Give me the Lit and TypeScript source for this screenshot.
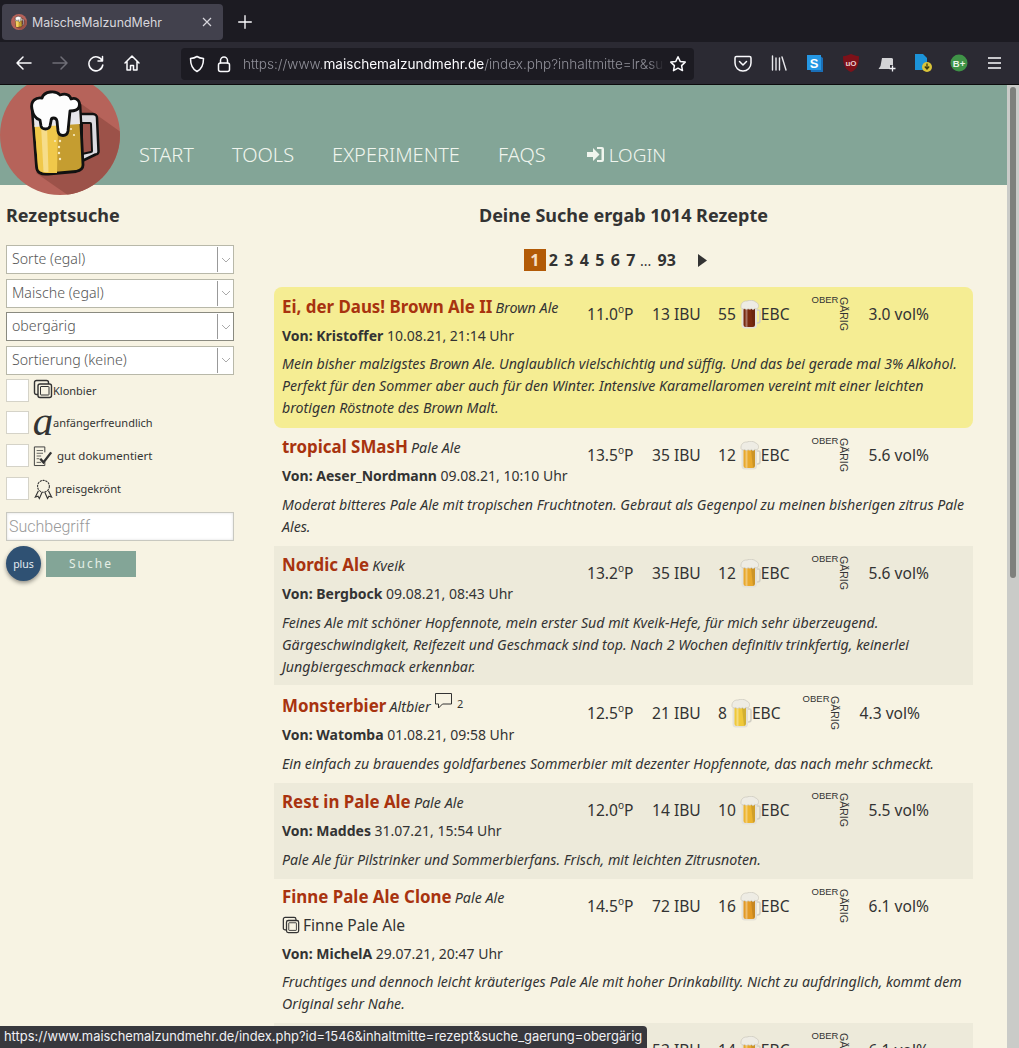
import { LitElement, html, css, svg } from 'lit'
import { customElement } from 'lit/decorators.js'

interface Recipe {
  title: string
  style: string
  comments?: number
  clone?: string
  author?: string
  date?: string
  plato?: string
  ibu: string
  ebc: string
  beer: string
  vol: string
  text: string
  cls?: string
}

const recipes: Recipe[] = [
  { title: 'Ei, der Daus! Brown Ale II', style: 'Brown Ale', author: 'Kristoffer', date: '10.08.21, 21:14 Uhr', plato: '11.0', ibu: '13', ebc: '55', beer: '#7a2a10', vol: '3.0', cls: 'top',
    text: 'Mein bisher malzigstes Brown Ale. Unglaublich vielschichtig und süffig. Und das bei gerade mal 3% Alkohol.\nPerfekt für den Sommer aber auch für den Winter. Intensive Karamellaromen vereint mit einer leichten\nbrotigen Röstnote des Brown Malt.' },
  { title: 'tropical SMasH', style: 'Pale Ale', author: 'Aeser_Nordmann', date: '09.08.21, 10:10 Uhr', plato: '13.5', ibu: '35', ebc: '12', beer: '#e9a92c', vol: '5.6',
    text: 'Moderat bitteres Pale Ale mit tropischen Fruchtnoten. Gebraut als Gegenpol zu meinen bisherigen zitrus Pale\nAles.' },
  { title: 'Nordic Ale', style: 'Kveik', author: 'Bergbock', date: '09.08.21, 08:43 Uhr', plato: '13.2', ibu: '35', ebc: '12', beer: '#e9a92c', vol: '5.6', cls: 'alt tight',
    text: 'Feines Ale mit schöner Hopfennote, mein erster Sud mit Kveik-Hefe, für mich sehr überzeugend.\nGärgeschwindigkeit, Reifezeit und Geschmack sind top. Nach 2 Wochen definitiv trinkfertig, keinerlei\nJungbiergeschmack erkennbar.' },
  { title: 'Monsterbier', style: 'Altbier', comments: 2, author: 'Watomba', date: '01.08.21, 09:58 Uhr', plato: '12.5', ibu: '21', ebc: '8', beer: '#f0c93a', vol: '4.3', cls: 'noted-row',
    text: 'Ein einfach zu brauendes goldfarbenes Sommerbier mit dezenter Hopfennote, das nach mehr schmeckt.' },
  { title: 'Rest in Pale Ale', style: 'Pale Ale', author: 'Maddes', date: '31.07.21, 15:54 Uhr', plato: '12.0', ibu: '14', ebc: '10', beer: '#edb52f', vol: '5.5', cls: 'alt',
    text: 'Pale Ale für Pilstrinker und Sommerbierfans. Frisch, mit leichten Zitrusnoten.' },
  { title: 'Finne Pale Ale Clone', style: 'Pale Ale', clone: 'Finne Pale Ale', author: 'MichelA', date: '29.07.21, 20:47 Uhr', plato: '14.5', ibu: '72', ebc: '16', beer: '#e39a25', vol: '6.1',
    text: 'Fruchtiges und dennoch leicht kräuteriges Pale Ale mit hoher Drinkability. Nicht zu aufdringlich, kommt dem\nOriginal sehr Nahe.' },
  // the status bar covers the left part of this row
  { title: '', style: '', ibu: '53', ebc: '14', beer: '#e9a92c', vol: '6.1', cls: 'alt', text: '' },
]

const cloneIcon = (size: number) => html`<svg width=${size} height=${size} viewBox="0 0 20 20" fill="none" stroke="#333" stroke-width="1.4">
  <path d="M5 15.500H3.500a2 2 0 0 1-2-2V3.500a2 2 0 0 1 2-2h10a2 2 0 0 1 2 2V5"/>
  <rect x="5" y="5" width="13.500" height="13.500" rx="2"/>
  <rect x="7.500" y="7.500" width="8.500" height="8.500" rx=".5" stroke-width="1"/>
</svg>`

const mug = (color: string) => html`<svg class="mug" width="21" height="29" viewBox="0 0 21 29">
  <path d="M16 10h2.500a1.500 1.500 0 0 1 1.500 1.500v9a2.500 2.500 0 0 1-2.500 2.500H16" fill="none" stroke="#d2cfc4" stroke-width="1.600"/>
  <path d="M1.500 7h15.500v18a3.500 3.500 0 0 1-3.500 3.500H5a3.500 3.500 0 0 1-3.500-3.500z" fill="#e4e1d8"/>
  <path d="M3.500 9h11.500v15.500a2.500 2.500 0 0 1-2.500 2.500H6a2.500 2.500 0 0 1-2.500-2.500z" fill=${color}/>
  <path d="M5.500 9h2v18h-1a1 1 0 0 1-1-1z" fill="#fff" opacity=".35"/>
  <path d="M11 9h4v15.500a2.500 2.500 0 0 1-2 2.400z" fill="#000" opacity=".12"/>
  <path d="M1 7.500C.5 3.500 3 .8 7 1c2.500-1.200 7-1 9 1.200 2.500.8 3.300 4 1.800 6-1 .9-2.300.7-3 0-.5 1.800-2.800 1.800-3.300.2-1 1.200-2.700 1.200-3.500 0-.8 1.500-2.300 1.600-3 .1C3.500 9.300 1.800 9 1 7.500z" fill="#eeece4" stroke="#c4c1b6" stroke-width=".6"/>
</svg>`

const logo = svg`
  <defs><clipPath id="disc"><circle cx="60" cy="60" r="60"/></clipPath></defs>
  <circle cx="60" cy="60" r="60" fill="#b6635a"/>
  <path clip-path="url(#disc)" d="M80 28 L122 58 V125 H75 L36 98 Z" fill="#9c5249"/>
  <path d="M79 39h14a4 4 0 0 1 4 4l1.500 33a3 3 0 0 1-3 3.500L82 86" fill="#dcdbe0" stroke="#111" stroke-width="2.500" stroke-linejoin="round"/>
  <path d="M82 48h8a1 1 0 0 1 1 1l1 27a1 1 0 0 1-1 1l-9 2z" fill="#9c5249" stroke="#111" stroke-width="2" stroke-linejoin="round"/>
  <path d="M32 32 L80 30 L83 90 Q83 95 76 96.500 L48 99 Q37 100 36.500 92 Z" fill="#c59d30" stroke="#111" stroke-width="2.800" stroke-linejoin="round"/>
  <path d="M34.500 50 L58 50 L57 98 L48 98 Q38 98.500 38 91 Z" fill="#f0c84a"/>
  <path d="M41 50 h6 l1.500 47 h-5 z" fill="#f6dd8a"/>
  <path d="M33.500 36 L79 32 L80 49 L34.500 52 Z" fill="#e7e6ea"/>
  <g fill="#f8edc4"><circle cx="60" cy="66" r="1.200"/><circle cx="59" cy="72" r="1.200"/><circle cx="59" cy="78" r="1.200"/><circle cx="60" cy="84" r="1.200"/><circle cx="71" cy="54" r="1.100"/><circle cx="74" cy="60" r="1.100"/><circle cx="55" cy="66" r="1"/></g>
  <path d="M32 34 C30 26 36 22 42 23 C44 16 56 15 60 20 C66 18 70 20 71 24 C76 22 81 26 79 32 C78 35 74 36 70 36 L68 56 C67 62 59 62 58 56 L57 46 C56 42 51 42 51 46 L50 51 C49 55 42 55 41 51 L40 45 C36 44 33 40 32 34 Z" fill="#fdfdfd" stroke="#111" stroke-width="2.800" stroke-linejoin="round"/>
`

@customElement('app-root')
export class AppRoot extends LitElement {
  static styles = css`
    :host {
      display: block;
      position: relative;
      height: 1048px;
      overflow: hidden;
      font-family: "Noto Sans", sans-serif;
      color: #333;
      background: #f7f3e3;
    }

    /* browser frame */
    .tabs {
      height: 42px;
      background: #1c1b22;
      display: flex;
      align-items: center;
      box-sizing: border-box;
      padding: 4px 2px 2px;
      font-family: Inter, sans-serif;
      color: #fbfbfe;
    }
    .tab {
      width: 221px;
      height: 36px;
      box-sizing: border-box;
      background: #42414d;
      border-radius: 4px;
      display: flex;
      align-items: center;
      padding: 0 10px 0 9px;
      font-size: 12.400px;
      color: #d7d6dc;
    }
    .tab .name { flex: 1; margin-left: 5px; }
    .newtab { margin-left: 13px; display: flex; }
    .toolbar {
      height: 43px;
      box-sizing: border-box;
      background: #2b2a33;
      border-bottom: 1px solid #0c0c0d;
      display: flex;
      align-items: center;
      padding: 0 0 0 14px;
    }
    .toolbar svg { display: block; flex: none; }
    .nav { display: flex; gap: 16px; width: 167px; }
    .url {
      width: 513px;
      height: 32px;
      margin-top: 2px;
      box-sizing: border-box;
      background: #1c1b22;
      border-radius: 4px;
      display: flex;
      align-items: center;
      padding: 0 7px 0 8px;
      font-family: Inter, sans-serif;
      font-size: 13.600px;
      font-weight: 300;
      color: #8f8f98;
      gap: 12px;
    }
    .url .addr {
      flex: 1;
      white-space: nowrap;
      overflow: hidden;
      margin-right: -7px;
      -webkit-mask-image: linear-gradient(to left, transparent, #000 14px);
      mask-image: linear-gradient(to left, transparent, #000 14px);
    }
    .url b { font-weight: 400; color: #fbfbfe; }
    .ext { display: flex; align-items: center; gap: 16px; margin-left: 39px; }

    /* page */
    .page { display: flex; height: 963px; }
    .view { flex: 1; min-width: 0; position: relative; overflow: hidden; }
    .logo { position: absolute; left: 0; top: -10px; display: block; }
    .header {
      height: 100px;
      background: #83a597;
      box-sizing: border-box;
      padding: 57px 0 0 139px;
      display: flex;
      gap: 38px;
      font-size: 20px;
      font-weight: 300;
      color: #f0f5ee;
    }
    .header a { display: flex; align-items: center; gap: 5px; height: 25px; }
    .header .login { margin-left: 3px; font-size: 19px; }
    .scroll {
      width: 12px;
      background: #cacbc8;
      box-sizing: border-box;
      padding: 2px 3px 0;
    }
    .thumb { height: 491px; border-radius: 3px; background: #7e807c; }

    .body { display: flex; }
    .side { width: 228px; margin: 0 40px 0 6px; }
    .side h2 { margin: 19px 0 18px; font-size: 18px; line-height: 23px; font-weight: 700; }
    .sel {
      height: 29px;
      box-sizing: border-box;
      margin-bottom: 4.500px;
      background: #fff;
      border: 1px solid #b8b8a9;
      display: flex;
      align-items: center;
      font-size: 14.200px;
      font-weight: 300;
      color: #555;
      padding: 0 0 2px 5px;
    }
    .sel.on { border-color: #8a8a80; }
    .sel span { flex: 1; }
    .arrow {
      width: 15px;
      height: 25px;
      margin-bottom: -2px;
      border-left: 1px solid #999;
      display: flex;
      align-items: center;
      justify-content: center;
    }
    .check {
      display: flex;
      align-items: center;
      height: 23px;
      margin-bottom: 10px;
      font-size: 11px;
      color: #333;
    }
    .check.first { margin-bottom: 9px; }
    .box {
      width: 23px;
      height: 23px;
      box-sizing: border-box;
      background: #fff;
      border: 1px solid #d5d3c8;
      margin-right: 4px;
      flex: none;
    }
    .ico { width: 20px; height: 24px; flex: none; display: flex; justify-content: center; }
    .a-ico { font: italic 41px/20px "Liberation Serif", serif; color: #333; }
    .check.doc { font-size: 11.500px; }
    .search {
      height: 29px;
      margin-top: 12px;
      box-sizing: border-box;
      background: #fff;
      border: 1px solid #c8c8c0;
      box-shadow: inset 0 0 3px #ddd;
      font: 300 16px/27px Roboto, sans-serif;
      color: #999;
      padding-left: 2px;
    }
    .actions { display: flex; align-items: center; margin-top: 5px; gap: 5px; }
    .plus {
      width: 35px;
      height: 35px;
      border-radius: 50%;
      background: #2f5173;
      color: #e4ebef;
      font-size: 10.500px;
      display: flex;
      align-items: center;
      justify-content: center;
      box-shadow: 0 2px 4px #0000006b;
    }
    .go {
      width: 90px;
      height: 26px;
      background: #83a597;
      color: #e6efe6;
      font-size: 12px;
      letter-spacing: 2px;
      display: flex;
      align-items: center;
      justify-content: center;
    }

    .main { width: 699px; }
    .main h1 { margin: 19px 0 0; font-size: 18px; line-height: 23px; font-weight: 700; text-align: center; }
    .pager {
      display: flex;
      justify-content: center;
      align-items: center;
      height: 22px;
      margin: 22px 0 16px;
      padding-right: 16px;
      font-size: 16px;
      font-weight: 700;
      gap: 6.400px;
    }
    .pager .cur { width: 22px; height: 22px; margin-right: -3.500px; background: #b25a06; color: #f6dfc4; text-align: center; line-height: 22px; }
    .pager .dots { font-weight: 400; margin: 0 0 0 -2px; font-size: 14px; }
    .pager svg { margin-left: 16px; }

    .row { padding: 7px 8px 8px; }
    .row.alt { background: #edeada; }
    .row.tight { padding-bottom: 7px; }
    .row.top { background: #f5ed93; border-radius: 8px; padding-top: 8px; padding-bottom: 9px; }
    .row.top .text { margin-top: 7px; }
    .row.cloned { padding-top: 6px; }
    .row.cloned .text { margin-top: 7px; }
    .row.cloned .by { margin-top: 6px; }
    .head { display: flex; }
    .left { width: 305px; flex: none; }
    .title { line-height: 24px; height: 24px; white-space: nowrap; }
    .title.noted { height: 26px; }
    .title a { font-size: 16.900px; font-weight: 700; color: #a8330f; }
    .title i { font-size: 14.300px; margin-left: -1px; }
    .note { display: inline-flex; vertical-align: 2px; align-items: flex-start; font-size: 11px; gap: 4px; margin-left: -1px; }
    .clone { display: flex; align-items: center; gap: 3px; font-size: 15.600px; height: 27px; margin-top: 2px; }
    .by { font-size: 14px; line-height: 20px; margin-top: 7px; white-space: nowrap; }
    .stats { display: flex; align-items: flex-start; margin-top: 8px; font-size: 15.600px; line-height: 24px; white-space: nowrap; }
    .row.top .stats { margin-top: 7px; }
    .row.noted-row .stats { margin-top: 9px; }
    .row.cloned .stats { margin-top: 9px; }
    .stats > div { flex: none; }
    .p { width: 65px; }
    .p sup { font-size: 10px; line-height: 0; vertical-align: 7px; }
    .ibu { width: 66px; }
    .ebc { display: flex; align-items: center; }
    .mug { margin: -3px 0 -3px 4px; }
    .gaerig { position: relative; width: 35px; margin-left: 22px; height: 36px; margin-top: -7px; font: 9.500px/10px "Liberation Sans", sans-serif; }
    .gaerig .down {
      position: absolute;
      left: 27px;
      top: 2px;
      writing-mode: vertical-rl;
      font-size: 10.500px;
      line-height: 10px;
    }
    .vol { margin-left: 22px; }
    .text { margin: 8px 0 0; font-size: 14.200px; line-height: 22px; font-style: italic; white-space: pre; }

    .status {
      position: absolute;
      left: 0;
      bottom: 0;
      width: 647px;
      height: 22px;
      box-sizing: border-box;
      background: #38383d;
      border-top-right-radius: 4px;
      color: #f0f0f4;
      font: 12.900px/22px Inter, sans-serif;
      padding-left: 4px;
      white-space: nowrap;
      overflow: hidden;
    }
  `

  private line(d: string, size = 20) {
    return html`<svg width=${size} height=${size} viewBox="0 0 20 20" fill="none" stroke="#fbfbfe" stroke-width="1.500" stroke-linecap="round" stroke-linejoin="round"><path d=${d}/></svg>`
  }

  private renderBrowser() {
    return html`
      <div class="tabs">
        <div class="tab">
          <svg width="16" height="16" viewBox="0 0 120 120">${logo}</svg>
          <span class="name">MaischeMalzundMehr</span>
          <svg width="12" height="12" viewBox="0 0 12 12" stroke="#d7d6dc" stroke-width="1.200"><path d="M2 2l8 8M10 2l-8 8"/></svg>
        </div>
        <div class="newtab">${this.line('M10 3v14M3 10h14', 18)}</div>
      </div>
      <div class="toolbar">
        <div class="nav">
          ${this.line('M17 10H3M9 4l-6 6 6 6')}
          <svg width="20" height="20" viewBox="0 0 20 20" fill="none" stroke="#6f6e77" stroke-width="1.500" stroke-linecap="round" stroke-linejoin="round"><path d="M3 10h14M11 4l6 6-6 6"/></svg>
          ${this.line('M16.500 3.500v4.500h-4.500M16.300 8a7 7 0 1 0 .5 4')}
          ${this.line('M3 10l7-7 7 7M5 8.500V17h3.500v-4.500h3V17H15V8.500')}
        </div>
        <div class="url">
          <svg width="16" height="18" viewBox="0 0 16 18" fill="none" stroke="#fbfbfe" stroke-width="1.500" stroke-linejoin="round"><path d="M8 1.500c2 1.300 4 1.800 6.500 2 0 6-1.500 10.500-6.500 13-5-2.500-6.500-7-6.500-13 2.500-.2 4.500-.7 6.500-2z"/></svg>
          <svg width="14" height="18" viewBox="0 0 14 18" fill="none" stroke="#fbfbfe" stroke-width="1.500" stroke-linecap="round"><rect x="1.500" y="8" width="11" height="8.500" rx="2"/><path d="M3.500 8V5.500a3.500 3.500 0 0 1 7 0V8"/></svg>
          <span class="addr">https://www.<b>maischemalzundmehr.de</b>/index.php?inhaltmitte=lr&amp;suche_gaerung=obergärig</span>
          <svg width="18" height="18" viewBox="0 0 18 18" fill="none" stroke="#fbfbfe" stroke-width="1.500" stroke-linejoin="round"><path d="M9 1.800l2.200 4.600 5 .7-3.600 3.500.9 5L9 13.200l-4.500 2.400.9-5L1.800 7.100l5-.7z"/></svg>
        </div>
        <div class="ext">
          <svg width="20" height="20" viewBox="0 0 20 20" fill="none" stroke="#fbfbfe" stroke-width="1.500" stroke-linecap="round" stroke-linejoin="round"><path d="M3.500 3.500h13a1.500 1.500 0 0 1 1.500 1.500v5a8 8 0 0 1-16 0V5a1.500 1.500 0 0 1 1.500-1.500z"/><path d="M6.500 8.500L10 12l3.500-3.500"/></svg>
          <svg width="20" height="20" viewBox="0 0 20 20" fill="none" stroke="#e8e8ec" stroke-width="1.400" stroke-linecap="round"><path d="M3.500 3v14M7 5v12M10.500 5v12M13 4l4 13"/></svg>
          <svg width="20" height="20" viewBox="0 0 20 20"><path d="M3 3h12l3 2v14H6z" fill="#1a6fb8"/><rect x="2" y="2" width="14" height="15" fill="#2597e4"/><text x="9" y="14.500" text-anchor="middle" font-family="Liberation Sans" font-weight="700" font-size="13" fill="#fff">S</text></svg>
          <svg width="20" height="20" viewBox="0 0 20 20"><path d="M10 1c2.800 1.300 5.500 2 8 2.200 0 8-1.800 13-8 15.800-6.200-2.800-8-7.800-8-15.800 2.500-.2 5.200-.9 8-2.200z" fill="#7d1119"/><text x="10" y="13" text-anchor="middle" font-family="Liberation Sans" font-weight="700" font-size="8" fill="#e8d0d0">uO</text></svg>
          <svg width="20" height="20" viewBox="0 0 20 20"><path d="M5 5h9.500a2 2 0 0 1 1.500 1v6h-3v4H1.500l2-3z" fill="#d3d3d6"/><path d="M15.500 12.500v6M12.500 15.500h6" stroke="#f0f0f4" stroke-width="1.300"/></svg>
          <svg width="20" height="20" viewBox="0 0 20 20"><path d="M2 1h8l4 4v12H2z" fill="#1c93d8"/><circle cx="14" cy="14" r="5" fill="#d9c43a"/><path d="M14 10.500v5M11.800 13.500l2.200 2.500 2.200-2.500" stroke="#3b3a10" stroke-width="1.300" fill="none"/></svg>
          <svg width="20" height="20" viewBox="0 0 20 20"><circle cx="10" cy="10" r="8.500" fill="#3f9347"/><text x="10" y="13.500" text-anchor="middle" font-family="Liberation Sans" font-weight="700" font-size="9.500" fill="#e8f4e8">B+</text></svg>
          <svg width="20" height="20" viewBox="0 0 20 20" stroke="#fbfbfe" stroke-width="1.500"><path d="M3 5h13M3 10h13M3 15h13"/></svg>
        </div>
      </div>
    `
  }

  private renderSelect(label: string, on = false) {
    return html`<div class="sel ${on ? 'on' : ''}"><span>${label}</span><div class="arrow">
      <svg width="10" height="6" viewBox="0 0 10 6" fill="none" stroke="#aaa"><path d="M1 1l4 4 4-4"/></svg>
    </div></div>`
  }

  private renderSide() {
    return html`
      <aside class="side">
        <h2>Rezeptsuche</h2>
        ${this.renderSelect('Sorte (egal)')}
        ${this.renderSelect('Maische (egal)')}
        ${this.renderSelect('obergärig', true)}
        ${this.renderSelect('Sortierung (keine)')}
        <label class="check first"><span class="box"></span><span class="ico">${cloneIcon(20)}</span><span>Klonbier</span></label>
        <label class="check"><span class="box"></span><span class="ico a-ico">a</span><span>anfängerfreundlich</span></label>
        <label class="check doc"><span class="box"></span><span class="ico">
          <svg width="22" height="24" viewBox="0 0 22 24" fill="none" stroke="#333"><path d="M13 18.500V22.500H1.500V2H13V8"/><path d="M4 6h7M4 9h7M4 12h5M4 15h3M4 19h5" stroke-width=".8"/><path d="M8 15l3.500 4L20 8" stroke-width="2.600"/></svg>
        </span><span style="margin-left:4px">gut dokumentiert</span></label>
        <label class="check"><span class="box"></span><span class="ico">
          <svg width="22" height="24" viewBox="0 0 22 24" fill="none" stroke="#333" stroke-width="1.200"><circle cx="11.500" cy="9" r="6.500" stroke-dasharray="2.400 .8"/><path d="M6 14l-3.500 7 3-1 1.500 2.500 3-7M17 14l3.500 7-3-1-1.500 2.500-3-7"/></svg>
        </span><span style="margin-left:2px">preisgekrönt</span></label>
        <div class="search">Suchbegriff</div>
        <div class="actions"><div class="plus">plus</div><div class="go">Suche</div></div>
      </aside>
    `
  }

  private renderRow(r: Recipe) {
    return html`
      <article class="row ${r.cls ?? ''} ${r.clone ? 'cloned' : ''}">
        <div class="head">
          <div class="left">
            <div class="title ${r.comments ? 'noted' : ''}">
              <a>${r.title}</a> <i>${r.style}</i>
              ${r.comments ? html`<span class="note">
                <svg width="19" height="18" viewBox="0 0 19 18" fill="none" stroke="#333"><path d="M1.500 1.500h16v10.500H8.500L4.500 16v-4h-3z"/></svg>${r.comments}</span>` : ''}
            </div>
            ${r.clone ? html`<div class="clone">${cloneIcon(18)}${r.clone}</div>` : ''}
            ${r.author ? html`<div class="by"><b>Von: ${r.author}</b> ${r.date}</div>` : ''}
          </div>
          <div class="stats">
            <div class="p">${r.plato ? html`${r.plato}<sup>o</sup>P` : ''}</div>
            <div class="ibu">${r.ibu} IBU</div>
            <div class="ebc">${r.ebc} ${mug(r.beer)}EBC</div>
            <div class="gaerig"><span>OBER</span><span class="down">GÄRIG</span></div>
            <div class="vol">${r.vol} vol%</div>
          </div>
        </div>
        <p class="text">${r.text}</p>
      </article>
    `
  }

  render() {
    return html`
      ${this.renderBrowser()}
      <div class="page">
        <div class="view">
          <div class="header">
            <a>START</a><a>TOOLS</a><a>EXPERIMENTE</a><a>FAQS</a>
            <a class="login">
              <svg width="17" height="15" viewBox="0 0 17 15" fill="#f0f5ee"><path d="M0 5h6V1l6.500 6.500L6 14v-4H0z"/><path d="M10 0h5a2 2 0 0 1 2 2v11a2 2 0 0 1-2 2h-5v-2h4.500V2H10z"/></svg>
              LOGIN
            </a>
          </div>
          <svg class="logo" width="120" height="120" viewBox="0 0 120 120">${logo}</svg>
          <div class="body">
            ${this.renderSide()}
            <main class="main">
              <h1>Deine Suche ergab 1014 Rezepte</h1>
              <div class="pager">
                <span class="cur">1</span><span>2</span><span>3</span><span>4</span><span>5</span><span>6</span><span>7</span>
                <span class="dots">...</span><span>93</span>
                <svg width="9" height="13" viewBox="0 0 9 13" fill="#333"><path d="M0 0l9 6.500-9 6.500z"/></svg>
              </div>
              ${recipes.map(r => this.renderRow(r))}
            </main>
          </div>
        </div>
        <div class="scroll"><div class="thumb"></div></div>
      </div>
      <div class="status">https://www.maischemalzundmehr.de/index.php?id=1546&amp;inhaltmitte=rezept&amp;suche_gaerung=obergärig</div>
    `
  }
}
